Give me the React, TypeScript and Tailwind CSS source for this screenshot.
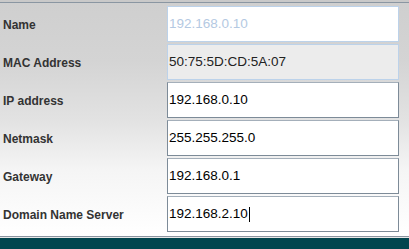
import React from "react";

const rows: { label: string; value: string; kind: "name" | "mac" | "edit"; caret?: boolean }[] = [
  { label: "Name", value: "192.168.0.10", kind: "name" },
  { label: "MAC Address", value: "50:75:5D:CD:5A:07", kind: "mac" },
  { label: "IP address", value: "192.168.0.10", kind: "edit" },
  { label: "Netmask", value: "255.255.255.0", kind: "edit" },
  { label: "Gateway", value: "192.168.0.1", kind: "edit" },
  { label: "Domain Name Server", value: "192.168.2.10", kind: "edit", caret: true },
];

export default function App() {
  return (
    <div className="w-[409px] h-[249px] flex flex-col overflow-hidden" style={{ fontFamily: '"Liberation Sans", Arial, sans-serif' }}>
      <div className="h-[2px] bg-[#c9c9c9]" />
      <div className="h-px bg-[#8a96a2]" />
      <div className="flex-1 flex flex-col gap-[2px] pt-[3px] pb-[4px] pr-[10px] bg-[linear-gradient(180deg,#cfcfcf_0%,#d4d4d4_25%,#e2e2e2_50%,#f5f5f5_72%,#ffffff_100%)]">
        {rows.map((r) => (
          <div key={r.label} className="flex items-center h-9">
            <div className="w-[167px] pl-[3px] pt-px text-[12px] font-bold text-[#333333]">{r.label}</div>
            <div
              className={
                "flex-1 h-9 flex items-center pl-[1px] pt-px text-[13.5px] " +
                (r.kind === "name"
                  ? "bg-white border border-[#bcd2ea] text-[#b4c9e2]"
                  : r.kind === "mac"
                  ? "bg-[#ececec] border border-[#bcd2ea] text-[#222]"
                  : "bg-white border border-[#7d8b98] border-t-[#a4afba] text-black")
              }
            >
              <span>{r.value}</span>
              {r.caret && <span className="w-px h-[15px] bg-black ml-[1px]" />}
            </div>
          </div>
        ))}
      </div>
      <div className="h-px bg-[#8a94a0]" />
      <div className="h-px bg-[#e8e8e8]" />
      <div className="h-[11px] bg-[#01464f]" />
    </div>
  );
}
